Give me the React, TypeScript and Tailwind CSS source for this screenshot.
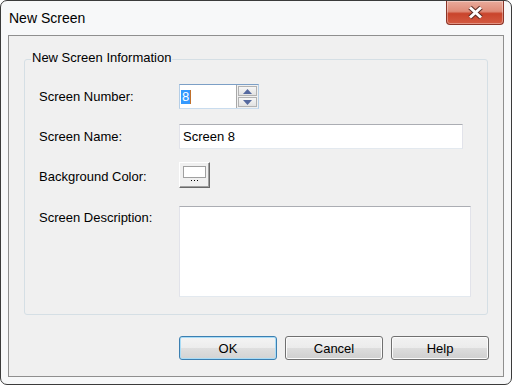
import type { ReactNode } from 'react';

const FONT = { fontFamily: '"Liberation Sans", Arial, sans-serif' };

function PushButton({ children, primary }: { children: ReactNode; primary?: boolean }) {
  return (
    <button
      className={
        primary
          ? 'w-[98px] h-[24px] rounded-[3px] border border-[#3c7fb1] shadow-[inset_0_0_0_1px_#a9dcf6] bg-[linear-gradient(to_bottom,#f4f4f4_0%,#ececec_50%,#dfdfdf_50%,#d3d3d3_100%)] text-[13px] text-black leading-none'
          : 'w-[98px] h-[24px] rounded-[3px] border border-[#707070] shadow-[inset_0_0_0_1px_#fbfbfb] bg-[linear-gradient(to_bottom,#f2f2f2_0%,#ebebeb_50%,#dddddd_50%,#cfcfcf_100%)] text-[13px] text-black leading-none'
      }
    >
      {children}
    </button>
  );
}

function SpinHalf({ up }: { up?: boolean }) {
  return (
    <div className="flex-1 flex items-center justify-center border border-[#b2b2b2] bg-[linear-gradient(to_bottom,#f6f6f6,#e2e2e2)]">
      <svg width="9" height="5" viewBox="0 0 9 5">
        {up ? <polygon points="4.5,0 9,5 0,5" fill="#55699f" /> : <polygon points="0,0 9,0 4.5,5" fill="#55699f" />}
      </svg>
    </div>
  );
}

export default function App() {
  return (
    <div className="w-[512px] h-[385px] bg-white" style={FONT}>
      <div className="h-full rounded-[7px] border border-[#3b3b3b] bg-[#f7f8f9] flex flex-col px-[7px] pb-[7px]">
        {/* title bar */}
        <div className="h-[34px] shrink-0 flex items-start">
          <div className="mt-[9px] pl-[1px] text-[14px] leading-[16px] text-black">New Screen</div>
          <div className="flex-1" />
          <div className="w-[58px] h-[24px] rounded-b-[4px] border border-t-0 border-[#8b3427] bg-[linear-gradient(to_bottom,#e9ab9c_0%,#df8b78_45%,#c9442c_55%,#d45b42_100%)] shadow-[inset_0_0_0_1px_rgba(255,255,255,0.35)] flex items-center justify-center">
            <svg width="17" height="15" viewBox="0 0 17 15">
              <path d="M3 2.5 L14 12.5 M14 2.5 L3 12.5" stroke="#5a2a22" strokeWidth="5" strokeLinecap="butt" />
              <path d="M3 2.5 L14 12.5 M14 2.5 L3 12.5" stroke="#ffffff" strokeWidth="3" strokeLinecap="butt" />
            </svg>
          </div>
        </div>

        {/* client area */}
        <div className="flex-1 border border-[#8f8f8f] bg-[#f0f0f0] flex flex-col text-[13px] text-black">
          <div className="relative mt-[23px] mx-[15px] h-[256px] rounded-[3px] border border-[#d5dfe5] pl-[14px] pt-[24px]">
            <span className="absolute left-[6px] top-[-10px] px-[1px] bg-[#f0f0f0] leading-[16px]">New Screen Information</span>

            <div className="h-[25px] flex items-center">
              <div className="w-[140px]">Screen Number:</div>
              <div className="w-[80px] h-[25px] flex border border-t-[#7c9fc6] border-x-[#b5cee6] border-b-[#c9dcee] bg-white">
                <div className="flex-1 flex items-center pl-[1px]">
                  <span className="bg-[#3399ff] text-white leading-[14px] px-[1px] border-r border-[#c0702c]">8</span>
                </div>
                <div className="w-[22px] flex flex-col gap-[1px] p-[1px] border-l border-[#a8a8a8] bg-[#f0f0f0]">
                  <SpinHalf up />
                  <SpinHalf />
                </div>
              </div>
            </div>

            <div className="mt-[15px] h-[25px] flex items-center">
              <div className="w-[140px]">Screen Name:</div>
              <div className="w-[284px] h-[25px] flex items-center pl-[3px] border border-t-[#abadb3] border-x-[#e2e3ea] border-b-[#e3e9ef] bg-white">
                Screen 8
              </div>
            </div>

            <div className="mt-[13px] h-[25px] flex items-center">
              <div className="w-[140px] pt-[4px]">Background Color:</div>
              <div className="w-[31px] h-[26px] flex flex-col items-center pt-[3px] border border-t-white border-l-white border-r-[#696969] border-b-[#696969] shadow-[inset_-1px_-1px_0_#a0a0a0] bg-[#f0f0f0]">
                <div className="w-[23px] h-[12px] border border-[#a0a0a0] bg-white" />
                <div className="mt-[2px] flex gap-[2px]">
                  <div className="w-[1px] h-[1px] bg-black" />
                  <div className="w-[1px] h-[1px] bg-black" />
                  <div className="w-[1px] h-[1px] bg-black" />
                </div>
              </div>
            </div>

            <div className="mt-[19px] flex items-start">
              <div className="w-[140px] pt-[4px] leading-[16px]">Screen Description:</div>
              <div className="w-[292px] h-[91px] border border-t-[#abadb3] border-x-[#e2e3ea] border-b-[#e3e9ef] bg-white" />
            </div>
          </div>

          <div className="mt-[21px] pr-[14px] flex justify-end gap-[8px]">
            <PushButton primary>OK</PushButton>
            <PushButton>Cancel</PushButton>
            <PushButton>Help</PushButton>
          </div>
        </div>
      </div>
    </div>
  );
}
